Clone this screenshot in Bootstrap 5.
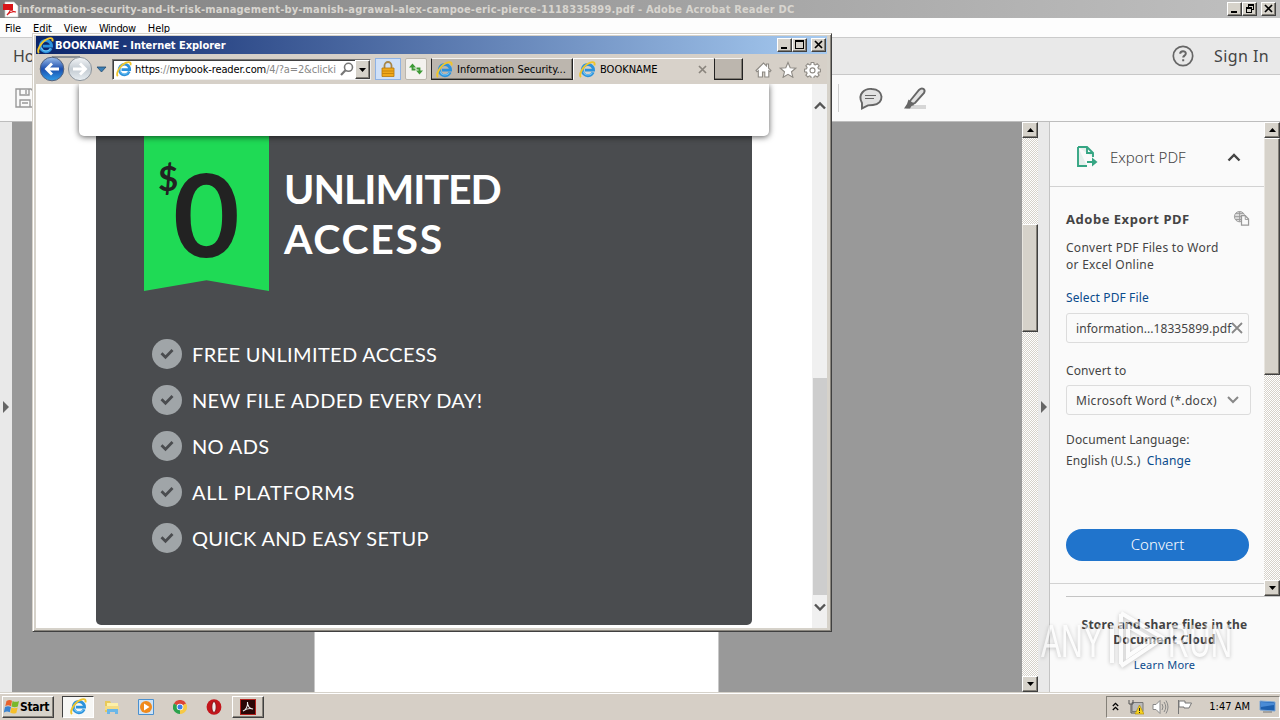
<!DOCTYPE html>
<html lang="en">
<head>
    <meta charset="UTF-8" />
    <meta name="viewport" content="width=device-width, initial-scale=1.0" />
    <title>BOOKNAME - Internet Explorer</title>
    <link href="https://cdn.jsdelivr.net/npm/bootstrap@5.3.0/dist/css/bootstrap.min.css" rel="stylesheet" />
    <style>
        body {
            width: 1280px;
            height: 720px;
            font: 11px/14px "DejaVu Sans Condensed", "DejaVu Sans", sans-serif;
            color: #000;
            background: #999;
            white-space: nowrap;
        }

        svg { display: block; flex: none; }
        a { text-decoration: none; }

        /* Acrobat frame */
        .app-title {
            height: 18px;
            padding-left: 2px;
            color: #d8d5cf;
            font-weight: bold;
            background: linear-gradient(90deg, #808080, #c0c0c0);
        }
        .app-title .caption { letter-spacing: .17px; padding: 2px 0 0 0; }
        .app-menu { height: 20px; padding: 2px 0 0 5px; gap: 12px; background: #fdfdfd; border-bottom: 1px solid #cbcbcb; }
        .app-menu span { letter-spacing: -.1px; }
        .app-menu .wide { letter-spacing: -.35px; }
        .app-tabs { height: 37px; background: #e9e9e9; border-bottom: 1px solid #c8c8c8; font: 16px/20px "Noto Sans", sans-serif; color: #444; padding: 0 11px 0 13px; }
        .app-tabs .sign-in { letter-spacing: .4px; }
        .app-tools { height: 47px; background: #fafafa; border-bottom: 1px solid #bdbdbd; padding: 0 335px 0 15px; }
        .tool-sep { width: 1px; height: 28px; background: #cfcfcf; }
        .rail { width: 12px; background: #e9e9e9; }
        .rail-right { border-right: 1px solid #c4c4c4; }
        .pages { background: #999; padding-left: 302px; }
        .sheet { width: 405px; background: #fff; border: solid #c8c8c8; border-width: 0 1px; }

        /* classic Windows controls */
        .win-btn {
            width: 15px;
            height: 14px;
            background: #d6d2ca;
            border: 1px solid;
            border-color: #fff #404040 #404040 #fff;
            box-shadow: inset -1px -1px #848078;
        }
        .bar-v { width: 16px; background: repeating-conic-gradient(#d6d2ca 0 25%, #fff 0 50%) 0 0 / 2px 2px; }
        .bar-v .win-btn { width: 16px; height: 16px; }
        .bar-v .thumb { width: 16px; background: #d6d2ca; border: 1px solid; border-color: #fff #404040 #404040 #e8e5df; box-shadow: inset -1px -1px #848078; }
        .thumb-doc { height: 108px; margin-top: 86px; }
        .thumb-side { height: 237px; }

        /* export panel */
        .side { width: 230px; background: #fafafa; font-family: "Noto Sans", sans-serif; font-size: 12px; line-height: 17px; color: #444; letter-spacing: .12px; }
        .side a { color: #0a4b8c; }
        .side-scroll { height: 474px; }
        .side-body { width: 214px; border-bottom: 1px solid #d2d2d2; height: 462px; }
        .side-head { height: 65px; padding: 6px 23px 0 26px; border-bottom: 1px solid #d2d2d2; font-size: 15px; font-weight: 300; letter-spacing: 0; }
        .side-form { padding: 24px 14px 0 16px; }
        .side-form h6 { font-size: 13px; line-height: 17px; font-weight: bold; letter-spacing: .52px; margin: 0; }
        .side-form .intro { margin-top: 11px; letter-spacing: .27px; }
        .side-form .label-to { margin-top: 19px; }
        .side-form .label-lang { margin-top: 16px; }
        .field { width: 183px; height: 30px; border: 1px solid #dcdcdc; border-radius: 3px; padding: 0 7px 0 9px; }
        .field-file { margin-top: 7px; letter-spacing: .07px; }
        .field-type { margin-top: 6px; width: 185px; height: 30px; letter-spacing: .32px; }
        .convert { width: 183px; height: 32px; margin-top: 60px; border-radius: 16px; background: #2074cc; color: #fff; font-size: 15px; font-weight: 300; letter-spacing: 0; padding-bottom: 1px; }
        .side-foot { border-top: 1px solid #c4c4c4; margin-left: 16px; padding: 20px 17px 0 0; width: 214px; line-height: 15px; }
        .side-foot strong { letter-spacing: .22px; }
        .side-foot .more { margin-top: 10px; font-size: 11px; letter-spacing: .2px; }

        /* browser window */
        .ie {
            left: 32px;
            top: 33px;
            width: 800px;
            height: 599px;
            padding: 2px 4px 3px 3px;
            background: #d6d2ca;
            border: 1px solid;
            border-color: #d6d2ca #404040 #404040 #d6d2ca;
            box-shadow: inset 1px 1px #fff, inset -1px -1px #8a867e;
        }
        .ie-title { height: 18px; padding: 0 1px 0 1px; color: #fff; font-weight: bold; background: linear-gradient(90deg, #0a246a, #a6caf0); }
        .ie-title .caption { padding: 2px 0 0 1px; letter-spacing: -.03px; }
        .ie-bar { height: 30px; padding: 0 6px 0 2px; background: #d6d0c8; }
        .ie-bar span { padding-top: 1px; }
        .address { width: 259px; height: 21px; background: #fff; border: 1px solid; border-color: #777 #eee #eee #777; box-shadow: inset 1px 1px #404040; padding-left: 3px; }
        .address .host { width: 208px; padding-left: 3px; letter-spacing: -.13px; }
        .address .dim { color: #888; }
        .lock { width: 26px; height: 22px; background: #cfe0f8; border: 1px solid #8eb2e4; }
        .reload { width: 22px; height: 22px; background: #f4f2ef; border: 1px solid #bbb6ad; border-radius: 2px; }
        .tab-item { width: 142px; height: 22px; padding: 0 4px 0 4px; background: #bcb6ae; border: 1px solid; border-color: #f4f2ef #222 #222 #222; box-shadow: inset -1px -1px #807c74; }
        .tab-open { width: 141px; padding: 0 6px 0 5px; background: #d8d2ca; border-color: #fff transparent transparent #fff; box-shadow: none; }
        .tab-new { width: 29px; }
        .view { background: #fff; overflow: hidden; }
        .page-area { width: 776px; }
        .popup { width: 690px; height: 52px; margin-left: 43px; background: #fff; border-radius: 0 0 5px 5px; box-shadow: 0 1px 6px rgba(0, 0, 0, .65); position: relative; z-index: 1; }
        .offer { width: 656px; height: 489px; margin-left: 60px; background: #4a4c4f; border-radius: 0 0 5px 5px; color: #fff; font-family: Lato, sans-serif; padding-left: 48px; }
        .ribbon { width: 125px; height: 155px; background: #1fda55; clip-path: polygon(0 0, 100% 0, 100% 100%, 50% 93%, 0 100%); color: #222; font-weight: bold; }
        .ribbon sup { font-size: 35px; line-height: 40px; top: 0; margin: 21px 0 0 14px; width: 15px; }
        .ribbon span { font-size: 115px; line-height: 153px; }
        .offer h1 { font-size: 41px; line-height: 50px; font-weight: bold; margin: 28px 0 0 15px; letter-spacing: -1px; }
        .offer h1 .loose { letter-spacing: 1.7px; }
        .perks { margin: 48px 0 0 8px; gap: 16px; font-size: 20px; line-height: 30px; letter-spacing: .35px; }
        .perks li { gap: 10px; }
        .perks .loose { letter-spacing: .7px; }
        .view-bar { width: 15px; background: #f0f0f0; padding: 17px 0 16px; }
        .view-bar .grip { width: 14px; height: 217px; background: #cdcdcd; }

        /* taskbar */
        .taskbar { height: 28px; background: #d6cfc6; border-top: 1px solid #d6d2ca; box-shadow: inset 0 1px #fff; padding: 2px 0 2px 2px; }
        .start { width: 52px; height: 22px; background: #d6d2ca; border: 1px solid; border-color: #fff #404040 #404040 #fff; box-shadow: inset -1px -1px #848078; font-weight: bold; font-size: 12px; padding-left: 1px; letter-spacing: -.3px; }
        .tasks { margin-left: 8px; gap: 2px; }
        .task { width: 32px; height: 22px; border: 1px solid transparent; }
        .task-on { background: #f7f7f5; border-color: #404040 #fff #fff #404040; }
        .task-up { border-color: #fff #404040 #404040 #fff; box-shadow: inset -1px -1px #848078; }
        .tray { height: 22px; width: 174px; border: 1px solid; border-color: #848078 #fff #fff #848078; padding: 0 3px 0 5px; }
        .tray .clock { margin-right: 9px; }

        .stamp { left: 1040px; top: 605px; z-index: 5; opacity: .55; }
    </style>
</head>
<body class="d-flex flex-column overflow-hidden position-relative">

    <svg width="0" height="0" class="position-absolute">
        <symbol id="ie-logo" viewBox="0 0 16 16">
            <path d="M13.3 10.6A5.3 5.3 0 1 1 13.7 8.6H5.5" fill="none" stroke="#2b92dc" stroke-width="2.7" />
            <path d="M12.7 10.8A4.8 4.8 0 0 1 4 10" fill="none" stroke="#73c6f5" stroke-width="1" />
            <path d="M1.8 15.2C-.6 12.5 4 4.2 10 1.7c3.2-1.4 5.5-.4 4.4 2.5" fill="none" stroke="#f0c52b" stroke-width="1.8" />
        </symbol>
        <symbol id="arrow-up" viewBox="0 0 7 4"><path d="M0 4L3.5 0 7 4z" /></symbol>
        <symbol id="arrow-down" viewBox="0 0 7 4"><path d="M0 0h7L3.5 4z" /></symbol>
        <symbol id="minimize" viewBox="0 0 10 10"><path d="M1 7h6v2H1z" /></symbol>
        <symbol id="maximize" viewBox="0 0 10 10"><path d="M0 0h9v9H0zM1 2v6h7V2z" fill-rule="evenodd" /></symbol>
        <symbol id="restore" viewBox="0 0 10 10"><path d="M3 0h6v6H7V5h1V2H4v1H3zM1 3h6v6H1zM2 5v3h4V5z" fill-rule="evenodd" /></symbol>
        <symbol id="close" viewBox="0 0 10 10"><path d="M1 1l7 7M8 1L1 8" stroke="#000" stroke-width="1.7" /></symbol>
        <symbol id="tick" viewBox="0 0 30 30">
            <circle cx="15" cy="15" r="15" fill="#a0a5a8" />
            <path d="M9.5 14.2l4 4 7-7.2" fill="none" stroke="#4a4c4f" stroke-width="2.8" />
        </symbol>
    </svg>

    <!-- Acrobat title, menu and toolbars -->
    <div class="app-title d-flex align-items-center">
        <svg width="17" height="17" viewBox="0 0 17 17">
            <path d="M3 1h9l4 4v11H3z" fill="#fff" stroke="#ccc" stroke-width=".7" />
            <path d="M1 3h10v6H1z" fill="#d91519" />
            <path d="M5 14c3-3 4-6 3.4-8C8 9 11 11 14 11c-3-.8-7 .5-9 3z" fill="none" stroke="#d91519" stroke-width="1.2" />
        </svg>
        <span class="caption">information-security-and-it-risk-management-by-manish-agrawal-alex-campoe-eric-pierce-1118335899.pdf - Adobe Acrobat Reader DC</span>
        <div class="d-flex ms-auto pe-1">
            <span class="win-btn"><svg width="12" height="11" viewBox="-2 -1 12 11"><use href="#minimize" width="10" height="10" /></svg></span>
            <span class="win-btn me-1"><svg width="12" height="11" viewBox="-2 -1 12 11"><use href="#restore" width="10" height="10" /></svg></span>
            <span class="win-btn"><svg width="12" height="11" viewBox="-2 -1 12 11"><use href="#close" width="10" height="10" /></svg></span>
        </div>
    </div>
    <div class="app-menu d-flex align-items-center">
        <span>File</span><span>Edit</span><span>View</span><span class="wide">Window</span><span>Help</span>
    </div>
    <div class="app-tabs d-flex align-items-center">
        <span>Home</span>
        <svg class="ms-auto" width="22" height="22" viewBox="0 0 22 22">
            <circle cx="11" cy="11" r="9.7" fill="none" stroke="#666" stroke-width="1.7" />
            <path d="M8.200 8.800c0-3.600 5.600-3.400 5.600-.3 0 2.200-2.600 2-2.600 4.100M11.200 14.300v2" fill="none" stroke="#666" stroke-width="2" />
        </svg>
        <span class="sign-in ms-3 ps-1">Sign In</span>
    </div>
    <div class="app-tools d-flex align-items-center">
        <svg width="20" height="20" viewBox="0 0 20 20" fill="none" stroke="#999" stroke-width="1.4">
            <path d="M1 1h15l3 3v15H1zM5 1v6h9V1M11 2v4M5 19v-7h10v7M7 15h6" />
        </svg>
        <div class="tool-sep ms-auto"></div>
        <svg class="ms-3" width="90" height="28" viewBox="-1 0 90 28">
            <path d="M6 19C1 10 9 4 16 5c12 0 13 15 1 16l-5 .4-6 3z" fill="#e2e2e2" stroke="#666" stroke-width="1.900" />
            <path d="M9 11.500h11M9 14.500h9" stroke="#666" stroke-width="1.200" />
            <path d="M53 21h17v4H50z" fill="#d6d6d6" />
            <path d="M54 17L63 6c3-3 7-1 5 3L59 19c-2 1-5 0-5-2z" fill="#e2e2e2" stroke="#666" stroke-width="1.900" />
            <path d="M52.500 15.500l6 5.500-3 1-1.500 2.500h-6l3-4.500z" fill="#666" />
        </svg>
    </div>

    <!-- Document area and export panel -->
    <div class="d-flex flex-grow-1">
        <div class="rail d-flex align-items-center justify-content-center">
            <svg width="6" height="12" viewBox="0 0 6 12"><path d="M0 0l6 6-6 6z" fill="#666" /></svg>
        </div>
        <div class="pages d-flex flex-grow-1"><div class="sheet"></div></div>
        <div class="bar-v d-flex flex-column">
            <span class="win-btn d-flex align-items-center justify-content-center"><svg width="7" height="4"><use href="#arrow-up" /></svg></span>
            <div class="thumb thumb-doc"></div>
            <span class="win-btn d-flex align-items-center justify-content-center mt-auto"><svg width="7" height="4"><use href="#arrow-down" /></svg></span>
        </div>
        <div class="rail rail-right d-flex align-items-center justify-content-center">
            <svg width="6" height="12" viewBox="0 0 6 12"><path d="M0 0l6 6-6 6z" fill="#666" /></svg>
        </div>
        <div class="side">
            <div class="side-scroll d-flex">
                <div class="side-body">
                    <div class="side-head d-flex align-items-center">
                        <svg width="22" height="24" viewBox="0 0 22 24">
                            <path d="M2 2h9l6 6v4M11 2v6h6M2 2v19h9" fill="#e5efec" stroke="#35a583" stroke-width="1.9" />
                            <path d="M11 17h7" stroke="#35a583" stroke-width="2" />
                            <path d="M16 12.5l5.5 4.5-5.5 4.5z" fill="#35a583" />
                        </svg>
                        <span class="ms-2 ps-1">Export PDF</span>
                        <svg class="ms-auto" width="14" height="9" viewBox="0 0 14 9"><path d="M1.5 7.5L7 2l5.5 5.5" fill="none" stroke="#444" stroke-width="2.4" /></svg>
                    </div>
                    <div class="side-form">
                        <div class="d-flex justify-content-between">
                            <h6>Adobe Export PDF</h6>
                            <svg width="17" height="16" viewBox="0 1 18 17" fill="none" stroke="#999">
                                <circle cx="7" cy="7" r="5.5" fill="#ddd" /><path d="M1.5 7h11M7 1.5v11M3 3.5h8M3 10h8" />
                                <path d="M9 6h4l3.5 3.5V16H9z" fill="#fafafa" stroke-width="1.3" /><path d="M13 6v4h4" />
                            </svg>
                        </div>
                        <div class="intro">Convert PDF Files to Word<br>or Excel Online</div>
                        <div class="mt-3"><a href="#">Select PDF File</a></div>
                        <div class="field field-file d-flex align-items-center"><span>information...18335899.pdf</span>
                            <svg class="ms-auto" width="12" height="12" viewBox="0 0 12 12"><path d="M1 1l10 10M11 1L1 11" stroke="#888" stroke-width="1.8" /></svg>
                        </div>
                        <div class="label-to">Convert to</div>
                        <div class="field field-type d-flex align-items-center"><span>Microsoft Word (*.docx)</span>
                            <svg class="ms-auto me-1" width="12" height="8" viewBox="0 0 12 8"><path d="M1 1l5 5 5-5" fill="none" stroke="#888" stroke-width="2" /></svg>
                        </div>
                        <div class="label-lang">Document Language:</div>
                        <div class="mt-1">English (U.S.)&nbsp; <a href="#">Change</a></div>
                        <div class="convert d-flex align-items-center justify-content-center">Convert</div>
                    </div>
                </div>
                <div class="bar-v d-flex flex-column">
                    <span class="win-btn d-flex align-items-center justify-content-center"><svg width="7" height="4"><use href="#arrow-up" /></svg></span>
                    <div class="thumb thumb-side"></div>
                    <span class="win-btn d-flex align-items-center justify-content-center mt-auto"><svg width="7" height="4"><use href="#arrow-down" /></svg></span>
                </div>
            </div>
            <div class="side-foot text-center">
                <strong>Store and share files in the<br>Document Cloud</strong>
                <div class="more"><a href="#">Learn More</a></div>
            </div>
        </div>
    </div>

    <!-- Taskbar -->
    <div class="taskbar d-flex align-items-center">
        <div class="start d-flex align-items-center">
            <svg width="16" height="16" viewBox="0 0 16 16">
                <path d="M2.500 2q3-2 5.500-.3L7 7.200Q4 5.500 1.300 7.200z" fill="#e8622c" />
                <path d="M8.600 2q3 1.700 6.400 0L13.800 7.500q-3 1.500-6.300 0z" fill="#79b82a" />
                <path d="M1 8q3-1.600 6 0L5.800 13.300Q3 11.800-.2 13.500z" fill="#3a83d0" />
                <path d="M7.400 8.400q3 1.500 6.300 0l-1.400 5.500q-3 1.500-6.100-.3z" fill="#f6bf2a" />
            </svg>
            <span>Start</span>
        </div>
        <div class="tasks d-flex">
            <div class="task task-on d-flex align-items-center justify-content-center"><svg width="17" height="17"><use href="#ie-logo" /></svg></div>
            <div class="task d-flex align-items-center justify-content-center">
                <svg width="16" height="16" viewBox="0 0 16 16">
                    <path d="M1 2h5l1 2h7v9H1z" fill="#e8c95a" /><path d="M3 4h11v5H3z" fill="#fdf0a8" />
                    <path d="M1 7h14v4H1z" fill="#f4dc85" /><path d="M3 15v-5h11v5h-3v-2H6v2z" fill="#6bb7e8" />
                </svg>
            </div>
            <div class="task d-flex align-items-center justify-content-center">
                <svg width="16" height="16" viewBox="0 0 16 16">
                    <path d="M.5.5h15v15H.5z" fill="#cfe3f5" stroke="#4a90cf" /><circle cx="8" cy="8" r="6" fill="#f08a1c" /><path d="M6 4.500l5.500 3.500L6 11.500z" fill="#fff" />
                </svg>
            </div>
            <div class="task d-flex align-items-center justify-content-center">
                <svg width="14" height="14" viewBox="0 0 14 14">
                    <path d="M7 7L.9 3.500A7 7 0 0 1 13.100 3.500z" fill="#dc4437" /><path d="M7 7L.9 3.500A7 7 0 0 0 7 14z" fill="#2ba24c" />
                    <path d="M7 7l6.100-3.500A7 7 0 0 1 7 14z" fill="#f6c945" /><circle cx="7" cy="7" r="3.300" fill="#fff" /><circle cx="7" cy="7" r="2.500" fill="#3b7ee8" />
                </svg>
            </div>
            <div class="task d-flex align-items-center justify-content-center">
                <svg width="16" height="16" viewBox="0 0 16 16"><ellipse cx="8" cy="8" rx="7.400" ry="7.800" fill="#c3151b" /><ellipse cx="8" cy="8" rx="2.200" ry="5.500" fill="#eee" stroke="#8a0d10" /></svg>
            </div>
            <div class="task task-up d-flex align-items-center justify-content-center">
                <svg width="16" height="16" viewBox="0 0 16 16"><path d="M0 0h16v16H0z" fill="#b3201c" /><path d="M1 1h14v14H1z" fill="#2a0606" /><path d="M3 12c3-1 5-5 4.500-9C7 7 10 10 13 10c-3-1-7 0-10 2z" fill="none" stroke="#eee" stroke-width="1.100" /></svg>
            </div>
        </div>
        <div class="tray d-flex align-items-center ms-auto">
            <svg width="7" height="9" viewBox="0 0 7 9"><path d="M.8 4l2.700-2.700L6.200 4M.8 8l2.700-2.700L6.200 8" fill="none" stroke="#000" stroke-width="1.300" /></svg>
            <svg class="ms-2 me-1" width="17" height="16" viewBox="-1 0 17 16">
                <path d="M4 3.500h11v9H4z" fill="#bbb" stroke="#777" /><path d="M1 1v4h4V1M3 5v9h4" fill="none" stroke="#555" /><path d="M11.500 6L16 15H7z" fill="#f7d21e" stroke="#a98500" stroke-width=".6" /><path d="M11.500 9v3m0 1v1" stroke="#222" />
            </svg>
            <svg class="ms-1" width="17" height="16" viewBox="0 0 17 16" fill="none" stroke="#888">
                <path d="M1 5.500h3l4-4v13l-4-4H1z" fill="#fff" /><path d="M10 5q2 3 0 6M12 3q3.500 5 0 10M14 1.500q4 6.500 0 13" />
            </svg>
            <svg class="ms-2" width="16" height="16" viewBox="0 0 16 16"><path d="M1.500 1v14M2 2h6v2h6.500L12 9H7V8H2z" fill="#fff" stroke="#777" /></svg>
            <span class="clock ms-auto">1:47 AM</span>
            <svg width="17" height="15" viewBox="0 0 17 15"><path d="M1 2l15 1v9L1 11z" fill="#1e5fae" stroke="#7aa6d8" /><path d="M2 3l13 1v2L2 8z" fill="#4a8bd6" /><path d="M4 13h9" stroke="#777" /></svg>
        </div>
    </div>

    <!-- Browser window -->
    <div class="ie position-absolute d-flex flex-column">
        <div class="ie-title d-flex align-items-center">
            <svg width="17" height="17"><use href="#ie-logo" /></svg>
            <span class="caption">BOOKNAME - Internet Explorer</span>
            <div class="d-flex ms-auto">
                <span class="win-btn"><svg width="12" height="11" viewBox="-2 -1 12 11"><use href="#minimize" width="10" height="10" /></svg></span>
                <span class="win-btn me-1"><svg width="12" height="11" viewBox="-2 -1 12 11"><use href="#maximize" width="10" height="10" /></svg></span>
                <span class="win-btn"><svg width="12" height="11" viewBox="-2 -1 12 11"><use href="#close" width="10" height="10" /></svg></span>
            </div>
        </div>
        <div class="ie-bar d-flex align-items-center">
            <svg width="74" height="28" viewBox="0 0 74 28">
                <defs>
                    <linearGradient id="ball" x2="0" y2="1"><stop stop-color="#9cbdea" /><stop offset=".5" stop-color="#1c4fae" /><stop offset="1" stop-color="#2f9be8" /></linearGradient>
                    <linearGradient id="ball-off" x2="0" y2="1"><stop stop-color="#f4f6f8" /><stop offset=".5" stop-color="#c3cbd2" /><stop offset="1" stop-color="#e8eef2" /></linearGradient>
                </defs>
                <path d="M14 2h28" stroke="#8b8f94" stroke-width="2" />
                <circle cx="14" cy="14" r="11.800" fill="url(#ball)" stroke="#53617c" />
                <path d="M21 14H9m5-5.500L8.500 14l5.500 5.500" fill="none" stroke="#fff" stroke-width="2.800" />
                <circle cx="42" cy="14" r="11.600" fill="url(#ball-off)" stroke="#8d949b" />
                <path d="M35 14h12m-5-5.500l5.500 5.500-5.500 5.500" fill="none" stroke="#fff" stroke-width="2.800" />
                <path d="M59 12h9l-4.500 5z" fill="#3b7eb5" stroke="#244c70" stroke-width=".8" />
            </svg>
            <div class="address d-flex align-items-center">
                <svg width="16" height="16"><use href="#ie-logo" /></svg>
                <span class="host">https<span class="dim">://</span>mybook-reader.com<span class="dim">/4/?a=2&amp;clicki</span></span>
                <svg width="14" height="14" viewBox="0 0 14 14"><circle cx="8.500" cy="5.300" r="4" fill="none" stroke="#777" stroke-width="1.600" /><path d="M5.500 8.200L1 13" stroke="#777" stroke-width="2.200" /></svg>
                <span class="win-btn d-flex align-items-center justify-content-center ms-auto h-100"><svg width="7" height="4"><use href="#arrow-down" /></svg></span>
            </div>
            <div class="lock d-flex align-items-center justify-content-center ms-1">
                <svg width="14" height="16" viewBox="0 0 14 16"><path d="M3.500 8V4.500a3.500 3.500 0 0 1 7 0V8" fill="none" stroke="#a8874a" stroke-width="1.800" /><path d="M1 7h12v8.500H1z" fill="#f0a81c" stroke="#b5770b" stroke-width=".8" /><path d="M1 10h12M1 12.500h12" stroke="#c8860d" /></svg>
            </div>
            <div class="reload d-flex align-items-center justify-content-center ms-1">
                <svg width="16" height="14" viewBox="0 0 16 14"><path d="M4.500 3v4.500h3M11.500 11V6.500h-3" fill="none" stroke="#3d9a36" stroke-width="1.800" /><path d="M1 5.500l3.500-4 3.500 4zM8 8.500l3.500 4 3.500-4z" fill="#3d9a36" /></svg>
            </div>
            <div class="tab-item d-flex align-items-center ms-1">
                <svg width="17" height="17"><use href="#ie-logo" /></svg><span class="ms-1">Information Security...</span>
            </div>
            <div class="tab-item tab-open d-flex align-items-center">
                <svg width="17" height="17"><use href="#ie-logo" /></svg><span class="ms-1">BOOKNAME</span>
                <svg class="ms-auto" width="9" height="9" viewBox="0 0 9 9"><path d="M1 1l7 7M8 1L1 8" stroke="#8a857e" stroke-width="1.700" /></svg>
            </div>
            <div class="tab-item tab-new"></div>
            <svg class="ms-auto" width="66" height="18" viewBox="0 -1 66 18" fill="#fff" stroke="#8e8a84" stroke-width="1.100">
                <path d="M1 9.500L8.500 2l3 3V3h2v4L16 9.500l-1 1.200-1.200-1V16h-4v-5H7.500v5H3.300V9.700L2 10.800z" />
                <path d="M33 1.500l2.200 5.200 5.600.4-4.300 3.700 1.400 5.500-4.900-3-4.900 3 1.400-5.500-4.300-3.700 5.600-.4z" />
                <path d="M56.200 1.500h2.600l.4 2 1.300.5 1.700-1.200 1.900 1.900-1.200 1.700.5 1.300 2 .4v2.600l-2 .4-.5 1.300 1.200 1.700-1.900 1.900-1.700-1.200-1.300.5-.4 2h-2.600l-.4-2-1.300-.5-1.700 1.200-1.900-1.900 1.200-1.700-.5-1.300-2-.4V8.100l2-.4.500-1.300-1.200-1.700 1.900-1.900L54.500 4l1.300-.5z" />
                <circle cx="57.500" cy="9.400" r="2.500" />
            </svg>
        </div>
        <div class="view d-flex flex-grow-1">
            <div class="page-area">
                <div class="popup"></div>
                <div class="offer">
                    <div class="d-flex">
                        <div class="ribbon d-flex"><sup>$</sup><span>0</span></div>
                        <h1>UNLIMITED<br><span class="loose">ACCESS</span></h1>
                    </div>
                    <ul class="perks list-unstyled d-flex flex-column">
                        <li class="d-flex"><svg width="30" height="30"><use href="#tick" /></svg><span>FREE UNLIMITED ACCESS</span></li>
                        <li class="d-flex"><svg width="30" height="30"><use href="#tick" /></svg><span>NEW FILE ADDED EVERY DAY!</span></li>
                        <li class="d-flex"><svg width="30" height="30"><use href="#tick" /></svg><span>NO ADS</span></li>
                        <li class="d-flex"><svg width="30" height="30"><use href="#tick" /></svg><span class="loose">ALL PLATFORMS</span></li>
                        <li class="d-flex"><svg width="30" height="30"><use href="#tick" /></svg><span>QUICK AND EASY SETUP</span></li>
                    </ul>
                </div>
            </div>
            <div class="view-bar d-flex flex-column align-items-center">
                <svg width="12" height="9" viewBox="0 0 12 9"><path d="M1 7.500l5-5 5 5" fill="none" stroke="#555" stroke-width="2.400" /></svg>
                <div class="grip mt-auto"></div>
                <svg class="mt-2" width="12" height="9" viewBox="0 0 12 9"><path d="M1 1.500l5 5 5-5" fill="none" stroke="#555" stroke-width="2.400" /></svg>
            </div>
        </div>
    </div>

    <!-- Watermark -->
    <svg class="stamp position-absolute" width="200" height="72" viewBox="0 0 200 72">
        <g fill="#fff" font-family="Liberation Sans Narrow, Liberation Sans, sans-serif" font-size="47" style="filter: drop-shadow(0 1px 2px rgba(0, 0, 0, .4))">
            <text x="1" y="52" textLength="62" lengthAdjust="spacingAndGlyphs">ANY</text>
            <text x="128" y="52" textLength="64" lengthAdjust="spacingAndGlyphs">RUN</text>
            <path d="M72 20v38M81 9v50M81 8l42 25-42 28M88 21l24 14-24 16z" fill="none" stroke="#fff" stroke-width="4" />
        </g>
    </svg>

    <script src="https://cdn.jsdelivr.net/npm/bootstrap@5.3.0/dist/js/bootstrap.bundle.min.js"></script>
</body>
</html>
